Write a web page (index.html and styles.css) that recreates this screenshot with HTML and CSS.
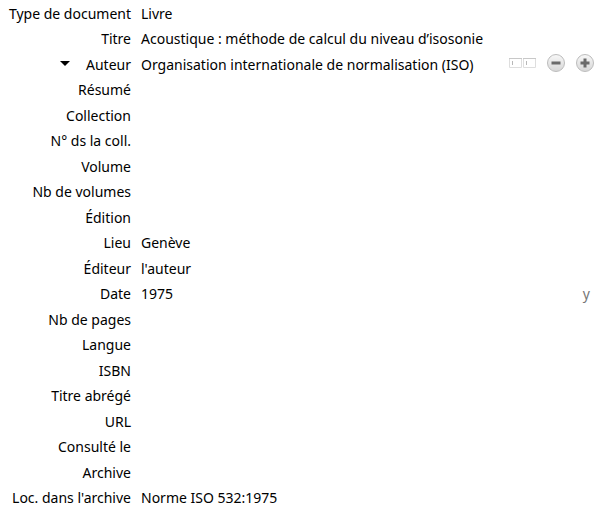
FILE: index.html
```html
<!DOCTYPE html>
<html lang="fr">
<head>
<meta charset="utf-8">
<title>Notice</title>
<link rel="stylesheet" href="styles.css">
</head>
<body>
<table class="fields">
<tbody>
<tr><th scope="row">Type de document</th><td>Livre</td></tr>
<tr><th scope="row">Titre</th><td>Acoustique : méthode de calcul du niveau d’isosonie</td></tr>
<tr><th scope="row"><div class="creator"><button class="menu" type="button" aria-label="Type de créateur"><svg width="10" height="5" viewBox="0 0 10 5"><path d="M0 0h10L5 5z"/></svg></button>Auteur</div></th>
<td><div class="value"><span>Organisation internationale de normalisation (ISO)</span>
<span class="actions">
<button class="names" type="button" aria-label="Champ unique"><svg width="27" height="10" viewBox="0 0 27 10"><path fill="#fff" stroke="#dedede" d="M.5.5h12v9H.5zM14.5.5h12v9h-12z"/><path stroke="#c8c8c8" d="M0 .5h13M14 .5h13"/><path stroke="#b8b8b8" d="M3.500 3v4M17.500 3v4"/></svg></button>
<button class="round" type="button" aria-label="Supprimer"><svg width="18" height="18" viewBox="0 0 18 18"><defs><linearGradient id="disc" x2="0" y2="1"><stop stop-color="#f8f8f8"/><stop offset="1" stop-color="#d6d6d6"/></linearGradient></defs><circle class="disc" cx="9" cy="9" r="8.500"/><path class="sign" d="M4.500 9h9"/></svg></button>
<button class="round" type="button" aria-label="Ajouter"><svg width="18" height="18" viewBox="0 0 18 18"><circle class="disc" cx="9" cy="9" r="8.500"/><path class="sign" d="M4.500 9h9M9 4.500v9"/></svg></button>
</span></div></td></tr>
<tr><th scope="row">Résumé</th><td></td></tr>
<tr><th scope="row">Collection</th><td></td></tr>
<tr><th scope="row">N° ds la coll.</th><td></td></tr>
<tr><th scope="row">Volume</th><td></td></tr>
<tr><th scope="row">Nb de volumes</th><td></td></tr>
<tr><th scope="row">Édition</th><td></td></tr>
<tr><th scope="row">Lieu</th><td>Genève</td></tr>
<tr><th scope="row">Éditeur</th><td>l'auteur</td></tr>
<tr><th scope="row">Date</th><td><div class="value"><span>1975</span><span class="format">y</span></div></td></tr>
<tr><th scope="row">Nb de pages</th><td></td></tr>
<tr><th scope="row">Langue</th><td></td></tr>
<tr><th scope="row">ISBN</th><td></td></tr>
<tr><th scope="row">Titre abrégé</th><td></td></tr>
<tr><th scope="row">URL</th><td></td></tr>
<tr><th scope="row">Consulté le</th><td></td></tr>
<tr><th scope="row">Archive</th><td></td></tr>
<tr><th scope="row">Loc. dans l'archive</th><td>Norme ISO 532:1975</td></tr>
</tbody>
</table>
</body>
</html>
```
FILE: styles.css
```css
body {
  margin: 0;
  padding-top: 2px;
  background: #fff;
  color: #000;
  font: 14px/24px "Noto Sans", sans-serif;
}
.fields { width: 100%; border-collapse: collapse; }
th, td { padding: 0; font-weight: 400; height: 25px; white-space: nowrap; vertical-align: top; }
tr:nth-child(even) > * { height: 26px; }
th { width: 131px; text-align: right; }
td { padding: 0 7px 0 10px; }
.value { display: flex; justify-content: space-between; height: 24px; }
.creator { display: flex; justify-content: flex-end; align-items: center; height: 24px; }
.actions { display: flex; align-items: center; gap: 11px; height: 20px; }
button { display: flex; padding: 0; border: 0; background: none; }
.menu { margin: 0 16px 4px 0; }
.disc { fill: url(#disc); stroke: #bcbcbc; }
.sign { stroke: #6a6a6a; stroke-width: 3; }
.format { color: #777; padding-right: 4px; }
```
